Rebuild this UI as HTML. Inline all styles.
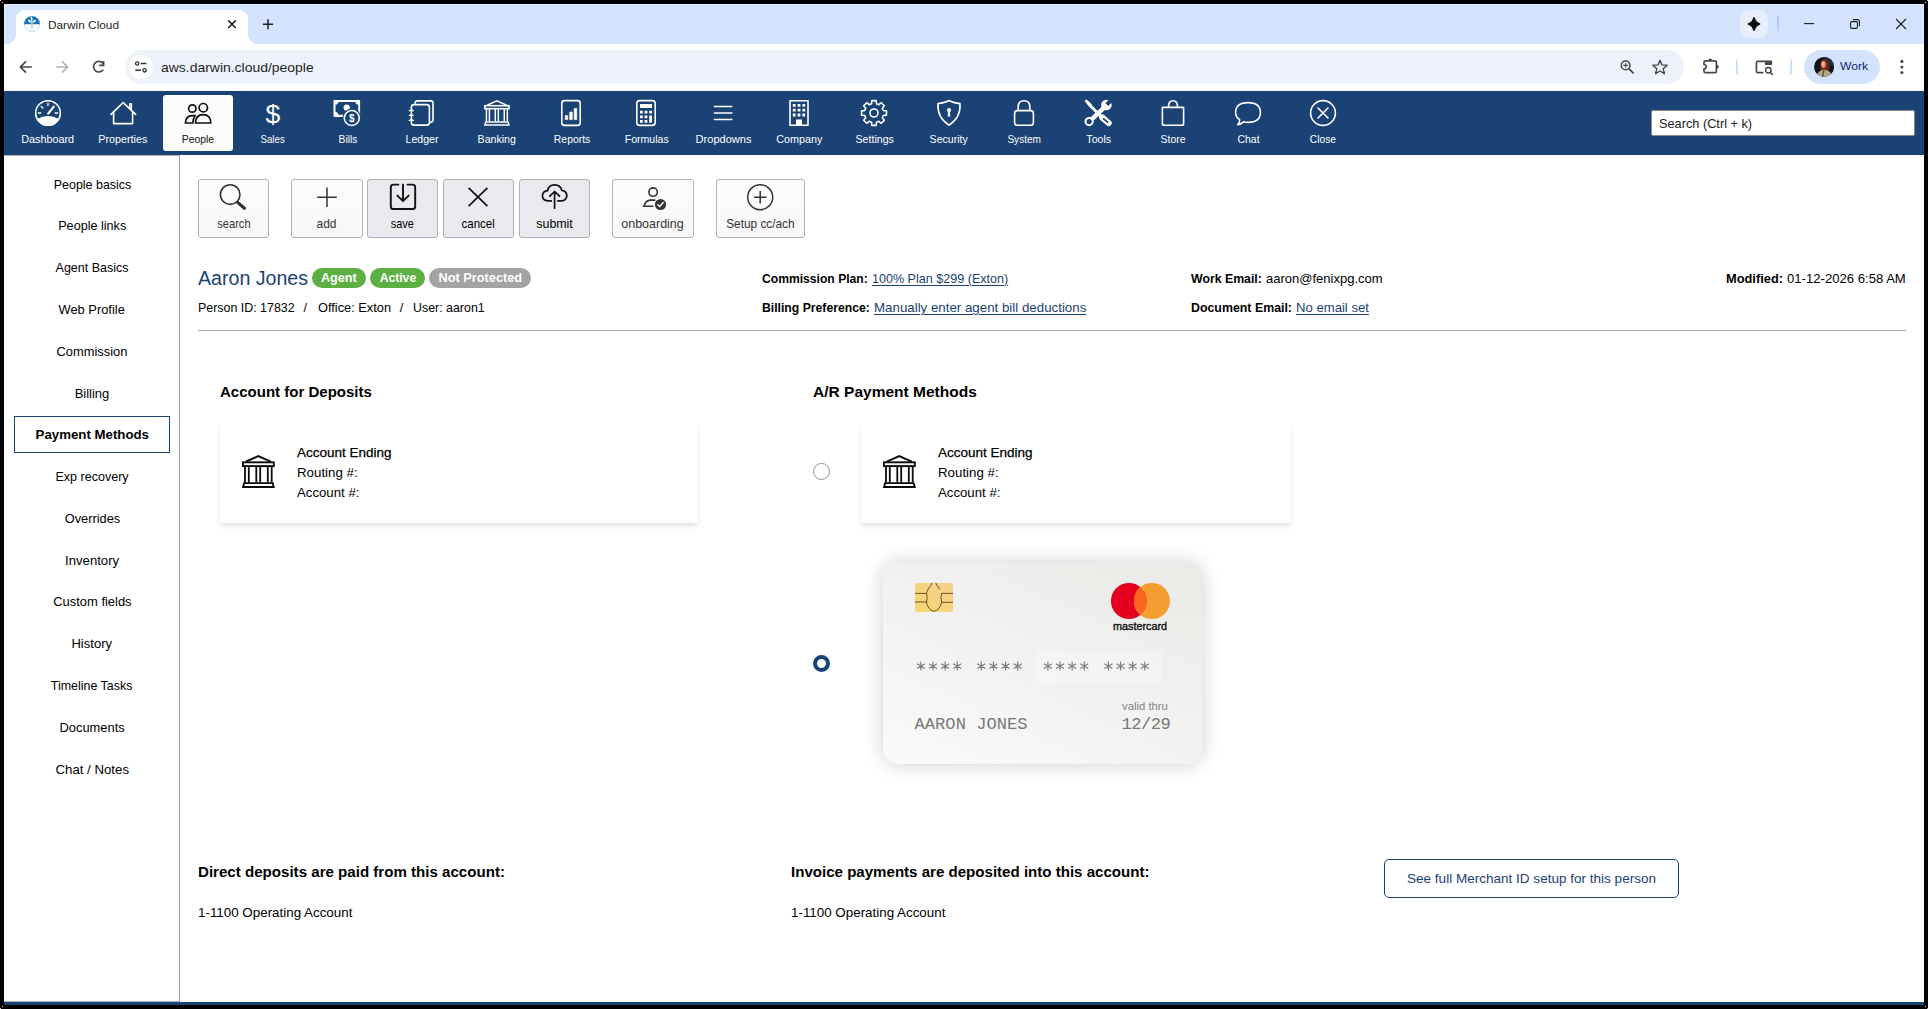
<!DOCTYPE html>
<html>
<head>
<meta charset="utf-8">
<title>Darwin Cloud</title>
<style>
*{box-sizing:border-box;margin:0;padding:0}
html,body{width:1928px;height:1009px;overflow:hidden;background:#000}
body{font-family:"Liberation Sans",sans-serif;font-size:13px;color:#000;position:relative}
.abs{position:absolute}
.t{position:absolute;white-space:pre;line-height:1}
#win{position:absolute;left:4px;top:4px;width:1920px;height:1001px;background:#fff;overflow:hidden}
/* ---------- chrome ---------- */
#tabstrip{position:absolute;left:0;top:0;width:1920px;height:40px;background:#d3e3fd;box-shadow:inset 1px 1px 0 #e2eefe,inset -1px 0 0 #e2eefe}
#tab{position:absolute;left:12px;top:6px;width:232px;height:34px;background:#fff;border-radius:9px 9px 0 0}
#tab:before,#tab:after{content:"";position:absolute;bottom:0;width:10px;height:10px;background:radial-gradient(circle at 0 0,rgba(255,255,255,0) 9.5px,#fff 10.5px)}
#tab:before{left:-10px}
#tab:after{right:-10px;background:radial-gradient(circle at 100% 0,rgba(255,255,255,0) 9.5px,#fff 10.5px)}
#toolbar{position:absolute;left:0;top:40px;width:1920px;height:47px;background:#fff}
#omni{position:absolute;left:121px;top:46px;width:1559px;height:34px;border-radius:17px;background:#edf2fa}
#profile{position:absolute;left:1800px;top:46px;width:76px;height:34px;border-radius:17px;background:#d3e3fd}
/* ---------- nav ---------- */
#nav{position:absolute;left:0;top:87px;width:1920px;height:64px;background:#1b4275}
.ni{position:absolute;top:0;width:90px;height:64px;margin-left:-45px;text-align:center;color:#fff}
.ni svg{position:absolute;left:31px;top:8px;width:28px;height:28px;overflow:visible}
.ni i,.si i,.btn i,.badge i{font-style:normal;display:inline-block}
.ni span{position:absolute;left:0;width:90px;top:41px;font-size:10.9px;line-height:14px;white-space:nowrap}
#nav-act{position:absolute;left:159px;top:4px;width:70px;height:56px;background:#fcfcfc;border-radius:3px}
#nsearch{position:absolute;left:1647px;top:19px;width:264px;height:26px;background:#fff;border:1px solid #8a8a8a;border-radius:2px}
/* ---------- sidebar ---------- */
#side{position:absolute;left:0;top:151px;width:176px;height:847px;border-right:1px solid #9a9a9a;border-top:1px solid #b5b5b5;border-bottom:1px solid #b0b0b0;background:#fff}
.si{position:absolute;left:0;width:176px;text-align:center;font-size:12.7px;line-height:16px;white-space:nowrap}
#si-act{position:absolute;left:10px;top:260px;width:156px;height:37px;border:1px solid #1b4275}
#botbar{position:absolute;left:0;top:998px;width:1920px;height:3px;background:#1b4275}

/* ---------- main ---------- */
.btn{position:absolute;top:175px;height:59px;border:1px solid #b4b4b4;border-radius:3px;background:linear-gradient(#fdfdfd,#f7f7f7);color:#333}
.btn.dk{background:#e9e9ee;color:#000;border-color:#b0b0b4}
.btn span{position:absolute;left:0;right:0;top:37px;text-align:center;font-size:12.6px;line-height:15px;white-space:nowrap}
.btn svg{position:absolute;left:50%;top:2px;width:30px;height:30px;margin-left:-15px;overflow:visible}
.badge{position:absolute;top:264px;height:20px;border-radius:10px;color:#fff;font-weight:700;font-size:12.6px;line-height:21.6px;text-align:center;white-space:nowrap}
.lbl{font-weight:700}
.lnk{color:#1b4275;text-decoration:underline;text-decoration-thickness:1px;text-underline-offset:1.5px}
.h{position:absolute;white-space:pre;font-weight:700;font-size:14.7px;line-height:18px}
.r{position:absolute;white-space:pre;font-size:12.8px;line-height:16px}
.card{position:absolute;top:417px;height:102px;background:#fff;box-shadow:0 4px 6px -1px rgba(0,0,0,.1),0 2px 4px -1px rgba(0,0,0,.06)}

#cc{position:absolute;left:879px;top:558.5px;width:319px;height:201.5px;border-radius:16px;background:linear-gradient(25deg,#fafafa,#e9eae6);box-shadow:0 0 20px rgba(0,0,0,.2)}
.mono{position:absolute;white-space:pre;font-family:"Liberation Mono",monospace;color:#787878;line-height:1}
</style>
</head>
<body>
<div id="win">
  <!-- CHROME -->
  <div id="tabstrip">
    <div id="tab"></div>
  </div>
  <div id="toolbar"></div>
  <div class="abs" style="left:0;top:86px;width:1920px;height:1px;background:#f3f2ee"></div>
  <div id="omni"></div>
  <div id="profile"></div>
  <svg class="abs" style="left:0;top:0" width="1920" height="87" viewBox="0 0 1920 87" fill="none">
    <!-- favicon -->
    <circle cx="28" cy="19.9" r="7.7" fill="#fff" stroke="#9fcde9" stroke-width="0.7"/>
    <path d="M20.05 20.2 A7.95 7.95 0 0 1 35.95 20.2 Z" fill="#1675b6"/>
    <g fill="#fff"><ellipse cx="27.5" cy="14.7" rx="0.95" ry="2.1" transform="rotate(-10 27.5 14.7)"/><ellipse cx="25.6" cy="17.3" rx="0.9" ry="2" transform="rotate(-52 25.6 17.3)"/><ellipse cx="30.3" cy="17.2" rx="0.9" ry="2" transform="rotate(52 30.3 17.2)"/><rect x="27.5" y="16.4" width="0.9" height="3.9"/></g>
    <path d="M28 20.4 V24.2 M28 21.6 L26.2 22.8 M28 21.6 L29.8 22.8 M26.8 24.2 H29.2" stroke="#7db9e0" stroke-width="0.6" stroke-linecap="round" opacity="0.85"/>
    <!-- tab close / new tab -->
    <path d="M224.2 16.4 L231.8 24 M231.8 16.4 L224.2 24" stroke="#1f1f1f" stroke-width="1.5"/>
    <path d="M264 15.2 V25.2 M259 20.2 H269" stroke="#1f1f1f" stroke-width="1.5"/>
    <!-- back / forward / reload -->
    <path d="M27.8 63 H16.6 M22 57.4 L16.4 63 L22 68.6" stroke="#474747" stroke-width="1.7" stroke-linejoin="miter"/>
    <path d="M52.2 63 H63.4 M58 57.4 L63.6 63 L58 68.6" stroke="#b5b5b5" stroke-width="1.7"/>
    <path d="M99 59.4 A5.3 5.3 0 1 0 99.3 65.6" stroke="#474747" stroke-width="1.7"/>
    <path d="M99.6 57 V61.4 H95.2" stroke="#474747" stroke-width="1.7"/>
    <!-- site info -->
    <circle cx="136.8" cy="62.9" r="12" fill="#fff"/>
    <circle cx="133.2" cy="59.5" r="1.7" stroke="#333" stroke-width="1.3"/>
    <path d="M136.7 59.5 H142.4 M131.3 66.3 H137" stroke="#333" stroke-width="1.4"/>
    <circle cx="140.6" cy="66.3" r="1.7" stroke="#333" stroke-width="1.3"/>
    <!-- zoom -->
    <circle cx="1621.6" cy="61.4" r="4.3" stroke="#474747" stroke-width="1.5"/>
    <path d="M1624.8 64.6 L1629.6 69.4" stroke="#474747" stroke-width="1.7"/>
    <path d="M1619.4 61.4 H1623.8 M1621.6 59.2 V63.6" stroke="#474747" stroke-width="1.2"/>
    <!-- star -->
    <path d="M1656 56.2 L1658 60.9 L1663.1 61.3 L1659.2 64.7 L1660.4 69.7 L1656 67 L1651.6 69.7 L1652.8 64.7 L1648.9 61.3 L1654 60.9 Z" stroke="#474747" stroke-width="1.4" stroke-linejoin="round"/>
    <!-- puzzle -->
    <path d="M1701.4 56.9 H1711 Q1712.4 56.9 1712.4 58.3 V67.3 Q1712.4 68.7 1711 68.7 H1701.4 Q1700 68.7 1700 67.3 V64.9 Q1702.2 64.6 1702.2 62.7 Q1702.2 60.8 1700 60.5 V58.3 Q1700 56.9 1701.4 56.9 Z" stroke="#474747" stroke-width="1.7" stroke-linejoin="round"/>
    <path d="M1704.3 56.4 A1.9 1.9 0 0 1 1708.1 56.4 Z M1713 60.9 A1.8 1.8 0 0 1 1713 64.5 Z" fill="#474747"/>
    <!-- dividers -->
    <path d="M1733 55.4 V70.6 M1787 55.4 V70.6" stroke="#cfe0fb" stroke-width="2"/>
    <!-- media/tab search -->
    <path d="M1759.4 68.7 H1753.8 A1.4 1.4 0 0 1 1752.4 67.3 V58.7 A1.4 1.4 0 0 1 1753.8 57.3 H1761.4" stroke="#474747" stroke-width="1.7"/>
    <rect x="1760.9" y="56.5" width="7.3" height="4.6" rx="1" fill="#474747"/>
    <circle cx="1764.3" cy="66.3" r="2.7" stroke="#474747" stroke-width="1.5"/>
    <path d="M1766.3 68.3 L1768.7 70.9" stroke="#474747" stroke-width="1.6"/>
    <!-- avatar -->
    <defs><clipPath id="avc"><circle cx="1820.1" cy="62.9" r="9.95"/></clipPath></defs>
    <g clip-path="url(#avc)">
      <rect x="1810" y="52" width="21" height="22" fill="#10151c"/>
      <ellipse cx="1826" cy="57" rx="6" ry="5" fill="#16304c"/>
      <path d="M1816.6 66 Q1815.2 58 1818 55.8 Q1821 54 1823.6 56.2 Q1825.8 58.6 1825.4 63 Q1825.6 66 1823.4 67.4 L1817.4 67.6 Z" fill="#6b2614"/>
      <ellipse cx="1819.6" cy="60.6" rx="2.3" ry="3.5" fill="#d8926f"/>
      <ellipse cx="1818.9" cy="60" rx="1.3" ry="2.4" fill="#eeb291"/>
      <path d="M1811.6 73.4 Q1813.2 68.4 1817 66.6 L1819.8 65.6 L1823.6 66.4 Q1827.4 68 1829.2 73.4 Z" fill="#b5a686"/>
      <path d="M1819.2 66 L1820.6 66 L1819.4 73 L1817.6 73 Z" fill="#5a5646"/>
    </g>
    <!-- dots -->
    <circle cx="1897.9" cy="57.4" r="1.55" fill="#474747"/><circle cx="1897.9" cy="63" r="1.55" fill="#474747"/><circle cx="1897.9" cy="68.6" r="1.55" fill="#474747"/>
    <!-- gemini -->
    <rect x="1736" y="6" width="28" height="28" rx="8.5" fill="#e6eefc"/>
    <path d="M1750 13.2 Q1751.4 18.6 1756.2 20 Q1751.4 21.4 1750 26.8 Q1748.6 21.4 1743.8 20 Q1748.6 18.6 1750 13.2 Z" fill="#0b0b0b" stroke="#0b0b0b" stroke-width="1" stroke-linejoin="round"/>
    <path d="M1774 12 V27" stroke="#a8c7fa" stroke-width="1.6"/>
    <!-- window controls -->
    <path d="M1800 19.6 H1810" stroke="#1f1f1f" stroke-width="1.1"/>
    <rect x="1846.6" y="17.6" width="6.8" height="6.8" rx="1.2" stroke="#1f1f1f" stroke-width="1.1"/>
    <path d="M1848.8 15.6 H1853.6 A1.8 1.8 0 0 1 1855.4 17.4 V22.2" stroke="#1f1f1f" stroke-width="1.1"/>
    <path d="M1892 15 L1902 25 M1902 15 L1892 25" stroke="#1f1f1f" stroke-width="1.1"/>
  </svg>
  <div class="t" style="transform:scaleX(1.0120);transform-origin:left center;left:44.4px;top:14px;font-size:11.7px;line-height:14px;color:#1f1f1f">Darwin Cloud</div>
  <div class="t" style="transform:scaleX(1.0257);transform-origin:left center;left:157.3px;top:54.5px;font-size:13.6px;line-height:17px;color:#1f1f1f">aws.darwin.cloud/people</div>
  <div class="t" style="transform:scaleX(1.0252);transform-origin:left center;left:1836px;top:54.9px;font-size:11.8px;line-height:15px;color:#0a2a6b">Work</div>

  <!-- NAV -->
  <div id="nav">
    <div id="nav-act"></div>
    <!-- NAV-ITEMS-START -->
    <div class="ni" style="left:44.1px"><svg viewBox="0 0 28 28" style="left:31.1px"><g stroke="#fff" stroke-width="1.6" fill="none" stroke-linecap="round" stroke-linejoin="round"><circle cx="14" cy="14" r="12.3"/><path d="M4.4 14 H6.8 M21.2 14 H23.6 M14 4.2 V6.6 M7.2 7.4 L8.8 9" stroke-width="1.3"/><path d="M14.2 14.6 L19.8 7.6" stroke-width="2.2"/></g><path d="M2.8 20.2 Q14 13.8 25.2 20.2 A12.6 12.6 0 0 1 2.8 20.2 Z" fill="#fff"/></svg><span><i style="transform:scaleX(0.9910);transform-origin:center center">Dashboard</i></span></div>
    <div class="ni" style="left:119.1px"><svg viewBox="0 0 28 28" style="left:30.9px"><g stroke="#fff" stroke-width="1.6" fill="none" stroke-linecap="round" stroke-linejoin="round"><path d="M2 15.4 L14.2 3.6 L26.6 15.4"/><path d="M4.6 13.4 V24.6 H23.6 V13.4"/><path d="M20.8 9 V4.8 H22.4 V11" stroke-width="1.4"/></g></svg><span><i style="transform:scaleX(0.9871);transform-origin:center center">Properties</i></span></div>
    <div class="ni" style="left:193.9px;color:#111"><svg viewBox="0 0 28 28" style="left:31.1px"><g stroke="#111" stroke-width="1.7" fill="none" stroke-linejoin="round"><circle cx="8.3" cy="9.5" r="3.7"/><circle cx="19.3" cy="8.7" r="4.2"/><path d="M11.6 24 Q11.6 15.6 19.2 15.6 Q26.8 15.6 26.8 24 Z"/><path d="M1.4 24 Q1.8 16.6 8 16.6 H11.2 Q9 19.6 9 24 Z"/></g></svg><span><i style="transform:scaleX(0.9551);transform-origin:center center">People</i></span></div>
    <div class="ni" style="left:268.8px"><svg viewBox="0 0 28 28" style="left:30.8px"><text x="14" y="23.6" text-anchor="middle" font-family="Liberation Sans" font-size="26.6" fill="#fff">$</text></svg><span><i style="transform:scaleX(0.8881);transform-origin:center center">Sales</i></span></div>
    <div class="ni" style="left:343.5px"><svg viewBox="0 0 28 28" style="left:30.9px"><path d="M1.4 0.9 H26.2 Q27.1 0.9 27.1 1.8 V17 Q27.1 17.9 26.2 17.9 H1.4 Q0.5 17.9 0.5 17 V1.8 Q0.5 0.9 1.4 0.9 Z" fill="#fff"/><path d="M5.2 2.9 H22.5 A2.7 2.7 0 0 0 25.2 5.6 V13.1 A2.7 2.7 0 0 0 22.5 15.8 H5.2 A2.7 2.7 0 0 0 2.5 13.1 V5.6 A2.7 2.7 0 0 0 5.2 2.9 Z" fill="#1b4275"/><circle cx="13.7" cy="8.7" r="3.1" fill="#fff"/><circle cx="18.8" cy="19" r="9.4" fill="#1b4275"/><circle cx="18.8" cy="19" r="7.5" fill="#1b4275" stroke="#fff" stroke-width="1.6"/><text x="18.8" y="22.7" text-anchor="middle" font-family="Liberation Sans" font-weight="700" font-size="10" fill="#fff">$</text></svg><span><i style="transform:scaleX(0.9415);transform-origin:center center">Bills</i></span></div>
    <div class="ni" style="left:418.2px"><svg viewBox="0 0 28 28" style="left:30.8px"><g stroke="#fff" stroke-width="1.6" fill="none" stroke-linecap="round" stroke-linejoin="round"><path d="M7.2 4.6 V4 Q7.2 1.9 9.4 1.9 H22.8 Q25 1.9 25 4 V20.8 Q25 22.8 22.6 23.4"/><rect x="3.4" y="5.6" width="18" height="20.5" rx="2.6"/><path d="M1.2 11.6 H5.4 M1.2 16.5 H5.4 M1.2 21.4 H5.4" stroke-width="1.2"/></g><path d="M1.8 11.4 L3.4 9 L5 11.4 Z M1.8 16.3 L3.4 13.9 L5 16.3 Z M1.8 21.2 L3.4 18.8 L5 21.2 Z" fill="#fff"/><rect x="0.4" y="8.6" width="2.2" height="14" fill="none"/></svg><span><i style="transform:scaleX(0.9699);transform-origin:center center">Ledger</i></span></div>
    <div class="ni" style="left:493.0px"><svg viewBox="0 0 28 28" style="left:31.0px"><g transform="translate(1.1 1) scale(0.782)" fill="none" stroke="#fff" stroke-width="2" stroke-linejoin="miter"><path d="M3.8 6.6 L16.3 1.1 L28.8 6.6"/><rect x="0.95" y="7.3" width="30.9" height="3.8"/><path d="M3 11.6 V27.6 M6.8 11.6 V27.6 M14.3 11.6 V27.6 M18.2 11.6 V27.6 M25.8 11.6 V27.6 M29.7 11.6 V27.6" stroke-width="1.9"/><path d="M2.1 28.1 H30.7 L31.7 32 H1.1 Z"/></g></svg><span><i style="transform:scaleX(0.9705);transform-origin:center center">Banking</i></span></div>
    <div class="ni" style="left:567.7px"><svg viewBox="0 0 28 28" style="left:30.8px"><g stroke="#fff" stroke-width="1.6" fill="none" stroke-linecap="round" stroke-linejoin="round"><rect x="4.8" y="1.6" width="18.4" height="24.8" rx="2.6"/></g><path d="M8.2 16.6 H10.8 V20.6 H8.2 Z M12.7 13 H15.3 V20.6 H12.7 Z M17.2 9.4 H19.8 V20.6 H17.2 Z" fill="#fff" stroke="#fff" stroke-width="0.6" stroke-linejoin="round"/></svg><span><i style="transform:scaleX(0.9570);transform-origin:center center">Reports</i></span></div>
    <div class="ni" style="left:642.5px"><svg viewBox="0 0 28 28" style="left:30.7px"><g stroke="#fff" stroke-width="1.6" fill="none" stroke-linecap="round" stroke-linejoin="round"><rect x="4.8" y="1.6" width="18.4" height="24.8" rx="2.8"/></g><path d="M8 5 H20 V9 H8 Z" fill="#fff"/><path d="M8 11.8 h2.8 v2.8 h-2.8 Z m4.6 0 h2.8 v2.8 h-2.8 Z m4.6 0 h2.8 v2.8 h-2.8 Z M8 16.4 h2.8 v2.8 h-2.8 Z m4.6 0 h2.8 v2.8 h-2.8 Z m4.6 0 h2.8 v7.4 h-2.8 Z M8 21 h2.8 v2.8 h-2.8 Z m4.6 0 h2.8 v2.8 h-2.8 Z" fill="#fff"/></svg><span><i style="transform:scaleX(0.9694);transform-origin:center center">Formulas</i></span></div>
    <div class="ni" style="left:719.1px"><svg viewBox="0 0 28 28" style="left:30.9px"><path d="M5.4 7.4 H22.8 M5.4 14 H22.8 M5.4 20.6 H22.8" stroke="#fff" stroke-width="1.5" stroke-linecap="round"/></svg><span><i style="transform:scaleX(1.0146);transform-origin:center center">Dropdowns</i></span></div>
    <div class="ni" style="left:795.5px"><svg viewBox="0 0 28 28" style="left:30.8px"><g stroke="#fff" stroke-width="1.6" fill="none" stroke-linecap="round" stroke-linejoin="round" stroke-linejoin="miter"><path d="M5 26.2 V1.8 H23 V26.2 Z"/></g><path d="M7.8 5 h2.8 v2.8 h-2.8 Z m4.8 0 h2.8 v2.8 h-2.8 Z m4.8 0 h2.8 v2.8 h-2.8 Z M7.8 9.8 h2.8 v2.8 h-2.8 Z m4.8 0 h2.8 v2.8 h-2.8 Z m4.8 0 h2.8 v2.8 h-2.8 Z M7.8 14.6 h2.8 v2.8 h-2.8 Z m4.8 0 h2.8 v2.8 h-2.8 Z m4.8 0 h2.8 v2.8 h-2.8 Z M11 20.6 H17 V26 H11 Z" fill="#fff"/></svg><span><i style="transform:scaleX(0.9866);transform-origin:center center">Company</i></span></div>
    <div class="ni" style="left:870.2px"><svg viewBox="0 0 28 28" style="left:30.8px"><g stroke="#fff" stroke-width="1.6" fill="none" stroke-linecap="round" stroke-linejoin="round"><path d="M11.53 4.72 L11.87 1.58 L16.13 1.58 L16.47 4.72 L18.81 5.69 L21.27 3.71 L24.29 6.73 L22.31 9.19 L23.28 11.53 L26.42 11.87 L26.42 16.13 L23.28 16.47 L22.31 18.81 L24.29 21.27 L21.27 24.29 L18.81 22.31 L16.47 23.28 L16.13 26.42 L11.87 26.42 L11.53 23.28 L9.19 22.31 L6.73 24.29 L3.71 21.27 L5.69 18.81 L4.72 16.47 L1.58 16.13 L1.58 11.87 L4.72 11.53 L5.69 9.19 L3.71 6.73 L6.73 3.71 L9.19 5.69 Z" stroke-linejoin="round"/><circle cx="14" cy="14" r="4"/></g></svg><span><i style="transform:scaleX(0.9731);transform-origin:center center">Settings</i></span></div>
    <div class="ni" style="left:945.0px"><svg viewBox="0 0 28 28" style="left:31.0px"><g stroke="#fff" stroke-width="1.6" fill="none" stroke-linecap="round" stroke-linejoin="round"><path d="M14 1.8 Q8.6 4.2 3 4.6 Q2 18.4 14 26.2 Q26 18.4 25 4.6 Q19.4 4.2 14 1.8 Z"/></g><circle cx="14" cy="11" r="2.1" fill="#fff"/><path d="M13.1 11.6 H14.9 L15.3 17.4 H12.7 Z" fill="#fff"/></svg><span><i style="transform:scaleX(0.9709);transform-origin:center center">Security</i></span></div>
    <div class="ni" style="left:1019.8px"><svg viewBox="0 0 28 28" style="left:30.8px"><g stroke="#fff" stroke-width="1.6" fill="none" stroke-linecap="round" stroke-linejoin="round"><rect x="4.6" y="11.6" width="18.8" height="14.6" rx="2.8"/><path d="M8.2 11.4 V7.6 Q8.2 1.8 14 1.8 Q19.8 1.8 19.8 7.6 V11.4"/></g></svg><span><i style="transform:scaleX(0.9225);transform-origin:center center">System</i></span></div>
    <div class="ni" style="left:1094.7px"><svg viewBox="0 0 28 28" style="left:30.7px"><g stroke="#fff" fill="none" stroke-linecap="butt" stroke-linejoin="round"><path d="M19.6 9.2 L7.4 20.6" stroke-width="4.4"/><circle cx="22.4" cy="6" r="5.3" fill="#fff" stroke="none"/><path d="M22.8 5.6 L28.6 -0.2" stroke="#1b4275" stroke-width="4"/><circle cx="5.1" cy="22.6" r="3.6" stroke-width="2" fill="#1b4275"/><path d="M1 1.9 L2.4 0.8 L7.2 5 L7.6 7.8 L5 7.2 Z" fill="#fff" stroke-width="0.8"/><path d="M5.8 6.2 L17.4 17.8" stroke-width="2.8"/><path d="M18.4 18.6 L24.6 24" stroke-width="6.2" stroke-linecap="round"/><path d="M19.6 19.8 L23.6 23.2" stroke="#1b4275" stroke-width="1.7" stroke-linecap="round"/></g></svg><span><i style="transform:scaleX(0.9710);transform-origin:center center">Tools</i></span></div>
    <div class="ni" style="left:1169.4px"><svg viewBox="0 0 28 28" style="left:31.0px"><g stroke="#fff" stroke-width="1.6" fill="none" stroke-linecap="round" stroke-linejoin="round"><path d="M3.4 8.4 H24.6 V24.4 Q24.6 26.2 22.8 26.2 H5.2 Q3.4 26.2 3.4 24.4 Z"/><path d="M9.4 8.2 Q9.4 1.8 14 1.8 Q18.6 1.8 18.6 8.2"/></g></svg><span><i style="transform:scaleX(0.9565);transform-origin:center center">Store</i></span></div>
    <div class="ni" style="left:1244.1px"><svg viewBox="0 0 28 28" style="left:30.9px"><g stroke="#fff" stroke-width="1.6" fill="none" stroke-linecap="round" stroke-linejoin="round"><path d="M14 3.6 Q26.4 3.6 26.4 13.6 Q26.4 23.4 14 23.4 Q11.6 23.4 9.6 22.8 Q7 25.2 3.8 25.6 Q6 23.4 5.6 20.6 Q1.6 18 1.6 13.6 Q1.6 3.6 14 3.6 Z"/></g></svg><span><i style="transform:scaleX(0.9602);transform-origin:center center">Chat</i></span></div>
    <div class="ni" style="left:1319.1px"><svg viewBox="0 0 28 28" style="left:30.9px"><g stroke="#fff" stroke-width="1.6" fill="none" stroke-linecap="round" stroke-linejoin="round"><circle cx="14" cy="14" r="12.4"/><path d="M9 9 L19 19 M19 9 L9 19"/></g></svg><span><i style="transform:scaleX(0.9374);transform-origin:center center">Close</i></span></div>
    <!-- NAV-ITEMS-END -->
    <div id="nsearch"><div class="t" style="transform:scaleX(1.0116);transform-origin:left center;left:7px;top:6.3px;font-size:12.6px;line-height:15px;color:#222">Search (Ctrl + k)</div></div>
  </div>

  <!-- SIDEBAR -->
  <div id="side">
    <div id="si-act"></div>
    <div class="si" style="top:20.9px"><i style="transform:scaleX(0.9810);transform-origin:center center">People basics</i></div>
    <div class="si" style="top:61.9px"><i style="transform:scaleX(0.9938);transform-origin:center center">People links</i></div>
    <div class="si" style="top:103.9px"><i style="transform:scaleX(0.9843);transform-origin:center center">Agent Basics</i></div>
    <div class="si" style="top:145.9px"><i style="transform:scaleX(1.0144);transform-origin:center center">Web Profile</i></div>
    <div class="si" style="top:187.9px"><i style="transform:scaleX(1.0158);transform-origin:center center">Commission</i></div>
    <div class="si" style="top:229.9px"><i style="transform:scaleX(1.0219);transform-origin:center center">Billing</i></div>
    <div class="si" style="top:271.3px;font-weight:700"><i style="transform:scaleX(1.0444);transform-origin:center center">Payment Methods</i></div>
    <div class="si" style="top:312.9px"><i style="transform:scaleX(0.9872);transform-origin:center center">Exp recovery</i></div>
    <div class="si" style="top:354.9px"><i style="transform:scaleX(1.0091);transform-origin:center center">Overrides</i></div>
    <div class="si" style="top:396.9px"><i style="transform:scaleX(1.0347);transform-origin:center center">Inventory</i></div>
    <div class="si" style="top:438.3px"><i style="transform:scaleX(1.0187);transform-origin:center center">Custom fields</i></div>
    <div class="si" style="top:479.9px"><i style="transform:scaleX(1.0283);transform-origin:center center">History</i></div>
    <div class="si" style="top:521.9px"><i style="transform:scaleX(0.9795);transform-origin:center center">Timeline Tasks</i></div>
    <div class="si" style="top:563.9px"><i style="transform:scaleX(1.0160);transform-origin:center center">Documents</i></div>
    <div class="si" style="top:605.9px"><i style="transform:scaleX(1.0421);transform-origin:center center">Chat / Notes</i></div>
  </div>

  <!-- MAIN -->
  <!-- toolbar buttons -->
  <div class="btn" style="left:194px;width:71px"><svg viewBox="0 0 30 30" fill="none" stroke="#333" style="margin-left:-16.5px"><circle cx="13.2" cy="12.6" r="9.8" stroke-width="1.6"/><path d="M20.6 20.4 L27.4 26.2" stroke-width="3.2" stroke-linecap="round"/></svg><span><i style="transform:scaleX(0.8833);transform-origin:center center">search</i></span></div>
  <div class="btn" style="left:287px;width:72px"><svg viewBox="0 0 30 30" fill="none" stroke="#333" stroke-width="1.5"><path d="M15 5.4 V25 M5.2 15.2 H24.8"/></svg><span><i style="transform:scaleX(0.9469);transform-origin:center center">add</i></span></div>
  <div class="btn dk" style="left:363px;width:71px"><svg viewBox="0 0 30 30" fill="none" stroke="#111" stroke-width="1.9" stroke-linecap="round" stroke-linejoin="round"><path d="M10.4 2.6 H5.4 Q2.8 2.6 2.8 5.2 V24.4 Q2.8 27 5.4 27 H24.6 Q27.2 27 27.2 24.4 V5.2 Q27.2 2.6 24.6 2.6 H19.6"/><path d="M15 2.6 V19 M9.4 13.6 L15 19.2 L20.6 13.6"/></svg><span><i style="transform:scaleX(0.8719);transform-origin:center center">save</i></span></div>
  <div class="btn dk" style="left:439px;width:71px"><svg viewBox="0 0 30 30" fill="none" stroke="#111" stroke-width="1.7" style="margin-left:-15.5px"><path d="M5.6 5.8 L24.4 24.2 M24.4 5.8 L5.6 24.2"/></svg><span><i style="transform:scaleX(0.9119);transform-origin:center center">cancel</i></span></div>
  <div class="btn dk" style="left:515px;width:71px"><svg viewBox="0 0 30 30" fill="none" stroke="#111" stroke-width="1.7" stroke-linecap="round" stroke-linejoin="round" style="top:3px"><path d="M11.3 17.9 H8 Q2.4 17.6 2.4 12.6 Q2.8 8.2 7.6 7.6 Q8.6 1.8 14.6 1.8 Q20.4 1.8 21.8 7.4 Q26.8 8 26.8 12.8 Q26.6 17.6 21.4 17.9 H17.9"/><path d="M14.6 25.2 V8.8 M9.8 13.2 L14.6 8.5 L19.5 13.2"/></svg><span><i style="transform:scaleX(0.9840);transform-origin:center center">submit</i></span></div>
  <div class="btn" style="left:608px;width:82px"><svg viewBox="0 0 30 30" fill="none" stroke="#333" stroke-width="1.6" stroke-linecap="round" style="top:3px"><circle cx="15.1" cy="9.1" r="4.2"/><path d="M16.9 17.1 H12.3 Q7.6 17.2 5.8 23.3 H15"/><circle cx="22.5" cy="21.5" r="5.6" fill="#333" stroke="none"/><path d="M19.9 21.7 L21.8 23.5 L25.2 19.5" stroke="#fff" stroke-width="1.5"/></svg><span><i style="transform:scaleX(0.9900);transform-origin:center center">onboarding</i></span></div>
  <div class="btn" style="left:712px;width:89px"><svg viewBox="0 0 30 30" fill="none" stroke="#333" stroke-width="1.5" style="margin-left:-15.8px"><circle cx="15.2" cy="15.2" r="12.5"/><path d="M15.2 9 V21.4 M9 15.2 H21.4"/></svg><span><i style="transform:scaleX(0.9394);transform-origin:center center">Setup cc/ach</i></span></div>

  <!-- header -->
  <div class="t" style="transform:scaleX(0.9999);transform-origin:left center;left:194px;top:261.5px;font-size:19.6px;line-height:24px;color:#1b4275">Aaron Jones</div>
  <div class="badge" style="left:308px;width:54px;background:#5bb041"><i style="transform:scaleX(1.0060);transform-origin:center center">Agent</i></div>
  <div class="badge" style="left:366px;width:55px;background:#5bb041"><i style="transform:scaleX(0.9653);transform-origin:center center">Active</i></div>
  <div class="badge" style="left:425px;width:102px;background:#a3a3a3"><i style="transform:scaleX(1.0136);transform-origin:center center">Not Protected</i></div>
  <div class="r" style="transform:scaleX(0.9698);transform-origin:left center;left:193.9px;top:295.5px">Person ID: 17832</div>
  <div class="r" style="left:299.6px;top:295.5px">/</div>
  <div class="r" style="transform:scaleX(0.9996);transform-origin:left center;left:314.2px;top:295.5px">Office: Exton</div>
  <div class="r" style="left:395.8px;top:295.5px">/</div>
  <div class="r" style="transform:scaleX(0.9691);transform-origin:left center;left:408.9px;top:295.5px">User: aaron1</div>
  <div class="r lbl" style="transform:scaleX(0.9477);transform-origin:left center;left:757.6px;top:266.5px">Commission Plan:</div>
  <div class="r lnk" style="transform:scaleX(0.9817);transform-origin:left center;left:867.5px;top:266.5px">100% Plan $299 (Exton)</div>
  <div class="r lbl" style="transform:scaleX(0.9533);transform-origin:left center;left:757.6px;top:295.5px">Billing Preference:</div>
  <div class="r lnk" style="transform:scaleX(1.0398);transform-origin:left center;left:869.5px;top:295.5px">Manually enter agent bill deductions</div>
  <div class="r lbl" style="transform:scaleX(0.9616);transform-origin:left center;left:1187.2px;top:266.5px">Work Email:</div>
  <div class="r" style="transform:scaleX(1.0164);transform-origin:left center;left:1262px;top:266.5px">aaron@fenixpg.com</div>
  <div class="r lbl" style="transform:scaleX(0.9662);transform-origin:left center;left:1187.2px;top:295.5px">Document Email:</div>
  <div class="r lnk" style="transform:scaleX(1.0250);transform-origin:left center;left:1292px;top:295.5px">No email set</div>
  <div class="r lbl" style="transform:scaleX(1.0022);transform-origin:left center;left:1722.4px;top:266.5px">Modified:</div>
  <div class="r" style="transform:scaleX(1.0244);transform-origin:left center;left:1782.7px;top:266.5px">01-12-2026 6:58 AM</div>
  <div class="abs" style="left:194px;top:326px;width:1708px;height:1px;background:#ababab"></div>

  <!-- sections -->
  <div class="h" style="transform:scaleX(1.0227);transform-origin:left center;left:215.6px;top:378.5px">Account for Deposits</div>
  <div class="card" style="left:216px;width:478px"><svg class="abs" style="left:22.2px;top:33.9px" width="33" height="33" viewBox="0 0 33 33" fill="none" stroke="#0a0a0a" stroke-width="1.9" stroke-linejoin="miter"><path d="M3.8 6.6 L16.3 1.1 L28.8 6.6"/><rect x="0.95" y="7.3" width="30.9" height="3.8"/><path d="M3 11.6 V27.6 M6.8 11.6 V27.6 M14.3 11.6 V27.6 M18.2 11.6 V27.6 M25.8 11.6 V27.6 M29.7 11.6 V27.6" stroke-width="1.8"/><path d="M2.1 28.1 H30.7 L31.7 32 H1.1 Z"/></svg>
    <div class="r" style="transform:scaleX(1.0551);transform-origin:left center;left:77.1px;top:23.5px;-webkit-text-stroke:0.25px #000">Account Ending</div>
    <div class="r" style="transform:scaleX(1.0387);transform-origin:left center;left:77.1px;top:43.5px">Routing #:</div>
    <div class="r" style="transform:scaleX(1.0319);transform-origin:left center;left:77.1px;top:63.5px">Account #:</div>
  </div>
  <div class="h" style="transform:scaleX(1.0563);transform-origin:left center;left:808.5px;top:378.5px">A/R Payment Methods</div>
  <div class="abs" style="left:808.6px;top:458.7px;width:17px;height:17px;border-radius:50%;border:1px solid #8f8f8f;background:#fff"></div>
  <div class="card" style="left:857px;width:430px"><svg class="abs" style="left:21.6px;top:33.9px" width="33" height="33" viewBox="0 0 33 33" fill="none" stroke="#0a0a0a" stroke-width="1.9" stroke-linejoin="miter"><path d="M3.8 6.6 L16.3 1.1 L28.8 6.6"/><rect x="0.95" y="7.3" width="30.9" height="3.8"/><path d="M3 11.6 V27.6 M6.8 11.6 V27.6 M14.3 11.6 V27.6 M18.2 11.6 V27.6 M25.8 11.6 V27.6 M29.7 11.6 V27.6" stroke-width="1.8"/><path d="M2.1 28.1 H30.7 L31.7 32 H1.1 Z"/></svg>
    <div class="r" style="transform:scaleX(1.0551);transform-origin:left center;left:77.2px;top:23.5px;-webkit-text-stroke:0.25px #000">Account Ending</div>
    <div class="r" style="transform:scaleX(1.0387);transform-origin:left center;left:77.2px;top:43.5px">Routing #:</div>
    <div class="r" style="transform:scaleX(1.0319);transform-origin:left center;left:77.2px;top:63.5px">Account #:</div>
  </div>
  <div class="abs" style="left:808.8px;top:651px;width:17px;height:17px;border-radius:50%;border:4.4px solid #1b4275;background:#fff"></div>

  <!-- credit card -->
  <div id="cc">
    <svg class="abs" style="left:32px;top:20.4px" width="38.2" height="29" viewBox="0 0 38.2 29" fill="none"><defs><linearGradient id="chipg" x1="0" y1="1" x2="1" y2="0"><stop offset="0" stop-color="#f8d66e"/><stop offset="1" stop-color="#f3d08e"/></linearGradient></defs><rect width="38.2" height="29" rx="2.2" fill="url(#chipg)"/><path d="M0 10.4 H11.5 M0 19 H11.5 M26.7 10.4 H38.2 M26.7 19.3 H38.2" stroke="#3a2b08" stroke-width="0.75"/><path d="M16.9 0 Q16.6 2.2 14.6 4 Q11.8 7 11.5 10.4 Q12.9 14.7 11.5 19 Q12.6 26.4 18.6 28.4 Q25 27 26.7 19.3 Q25.2 14.6 26.7 10.4" stroke="#2a1f06" stroke-width="0.7"/><path d="M20.9 0 Q21.2 2 23 3.8 Q24.4 5.2 24.9 6.6" stroke="#2a1f06" stroke-width="0.7"/></svg>
    <svg class="abs" style="left:226px;top:19.4px" width="62" height="40" viewBox="0 0 62 40"><circle cx="19.95" cy="19" r="18" fill="#e6001f"/><circle cx="42.9" cy="19" r="18.05" fill="#f59d31"/><path d="M31.43 5.13 A18 18 0 0 1 31.43 32.87 A18.05 18.05 0 0 1 31.43 5.13 Z" fill="#fb6321"/></svg>
    <div class="t" style="transform:scaleX(0.9813);transform-origin:left center;left:230.4px;top:57.3px;font-size:11px;line-height:12px;font-weight:400;color:#0d0d0d;-webkit-text-stroke:0.35px #0d0d0d">mastercard</div>
    <div class="abs" style="left:153px;top:88.4px;width:126px;height:31.5px;background:rgba(255,255,255,.27)"></div>
    <svg class="abs" style="left:0;top:0" width="319" height="201" viewBox="0 0 319 201" fill="none"><path d="M37.90 98.60V107.60M33.90 100.75L41.90 105.45M33.90 105.45L41.90 100.75M50.03 98.60V107.60M46.03 100.75L54.03 105.45M46.03 105.45L54.03 100.75M62.16 98.60V107.60M58.16 100.75L66.16 105.45M58.16 105.45L66.16 100.75M74.29 98.60V107.60M70.29 100.75L78.29 105.45M70.29 105.45L78.29 100.75M98.30 98.60V107.60M94.30 100.75L102.30 105.45M94.30 105.45L102.30 100.75M110.43 98.60V107.60M106.43 100.75L114.43 105.45M106.43 105.45L114.43 100.75M122.56 98.60V107.60M118.56 100.75L126.56 105.45M118.56 105.45L126.56 100.75M134.69 98.60V107.60M130.69 100.75L138.69 105.45M130.69 105.45L138.69 100.75M164.90 98.60V107.60M160.90 100.75L168.90 105.45M160.90 105.45L168.90 100.75M177.03 98.60V107.60M173.03 100.75L181.03 105.45M173.03 105.45L181.03 100.75M189.16 98.60V107.60M185.16 100.75L193.16 105.45M185.16 105.45L193.16 100.75M201.29 98.60V107.60M197.29 100.75L205.29 105.45M197.29 105.45L205.29 100.75M225.40 98.60V107.60M221.40 100.75L229.40 105.45M221.40 105.45L229.40 100.75M237.53 98.60V107.60M233.53 100.75L241.53 105.45M233.53 105.45L241.53 100.75M249.66 98.60V107.60M245.66 100.75L253.66 105.45M245.66 105.45L253.66 100.75M261.79 98.60V107.60M257.79 100.75L265.79 105.45M257.79 105.45L265.79 100.75" stroke="#7a7a7a" stroke-width="1.15"/></svg>
    <div class="mono" style="left:31.6px;top:153px;font-size:17.1px">AARON JONES</div>
    <div class="t" style="transform:scaleX(1.0282);transform-origin:left center;left:238.5px;top:137.5px;font-size:11px;line-height:13px;color:#858585">valid thru</div>
    <div class="mono" style="left:238.6px;top:153.3px;font-size:17.1px;letter-spacing:-0.55px">12/29</div>
  </div>

  <!-- footer -->
  <div class="h" style="transform:scaleX(1.0277);transform-origin:left center;left:194px;top:858.5px">Direct deposits are paid from this account:</div>
  <div class="r" style="transform:scaleX(1.0450);transform-origin:left center;left:194px;top:900.5px">1-1100 Operating Account</div>
  <div class="h" style="transform:scaleX(1.0263);transform-origin:left center;left:787.2px;top:858.5px">Invoice payments are deposited into this account:</div>
  <div class="r" style="transform:scaleX(1.0450);transform-origin:left center;left:787.2px;top:900.5px">1-1100 Operating Account</div>
  <div class="abs" style="left:1380px;top:855px;width:295px;height:39px;border:1px solid #1b4275;border-radius:5px;background:#fff"></div>
  <div class="r" style="transform:scaleX(1.0576);transform-origin:left center;left:1403px;top:866.5px;color:#1b4275">See full Merchant ID setup for this person</div>


  <div id="botbar"></div>
</div>
<div class="abs" style="left:0;top:0;width:1px;height:1px;background:#e6e6e6"></div><div class="abs" style="left:2px;top:2px;width:1px;height:1px;background:#c4c4c4"></div>
<div class="abs" style="left:1927px;top:0;width:1px;height:1px;background:#c8c8c8"></div><div class="abs" style="left:1925px;top:2px;width:1px;height:1px;background:#c4c4c4"></div>
<div class="abs" style="left:0;top:1008px;width:1px;height:1px;background:#c8c8c8"></div><div class="abs" style="left:2px;top:1006px;width:1px;height:1px;background:#c4c4c4"></div>
<div class="abs" style="left:1927px;top:1008px;width:1px;height:1px;background:#a8a8a8"></div><div class="abs" style="left:1925px;top:1006px;width:1px;height:1px;background:#c4c4c4"></div>
</body>
</html>
